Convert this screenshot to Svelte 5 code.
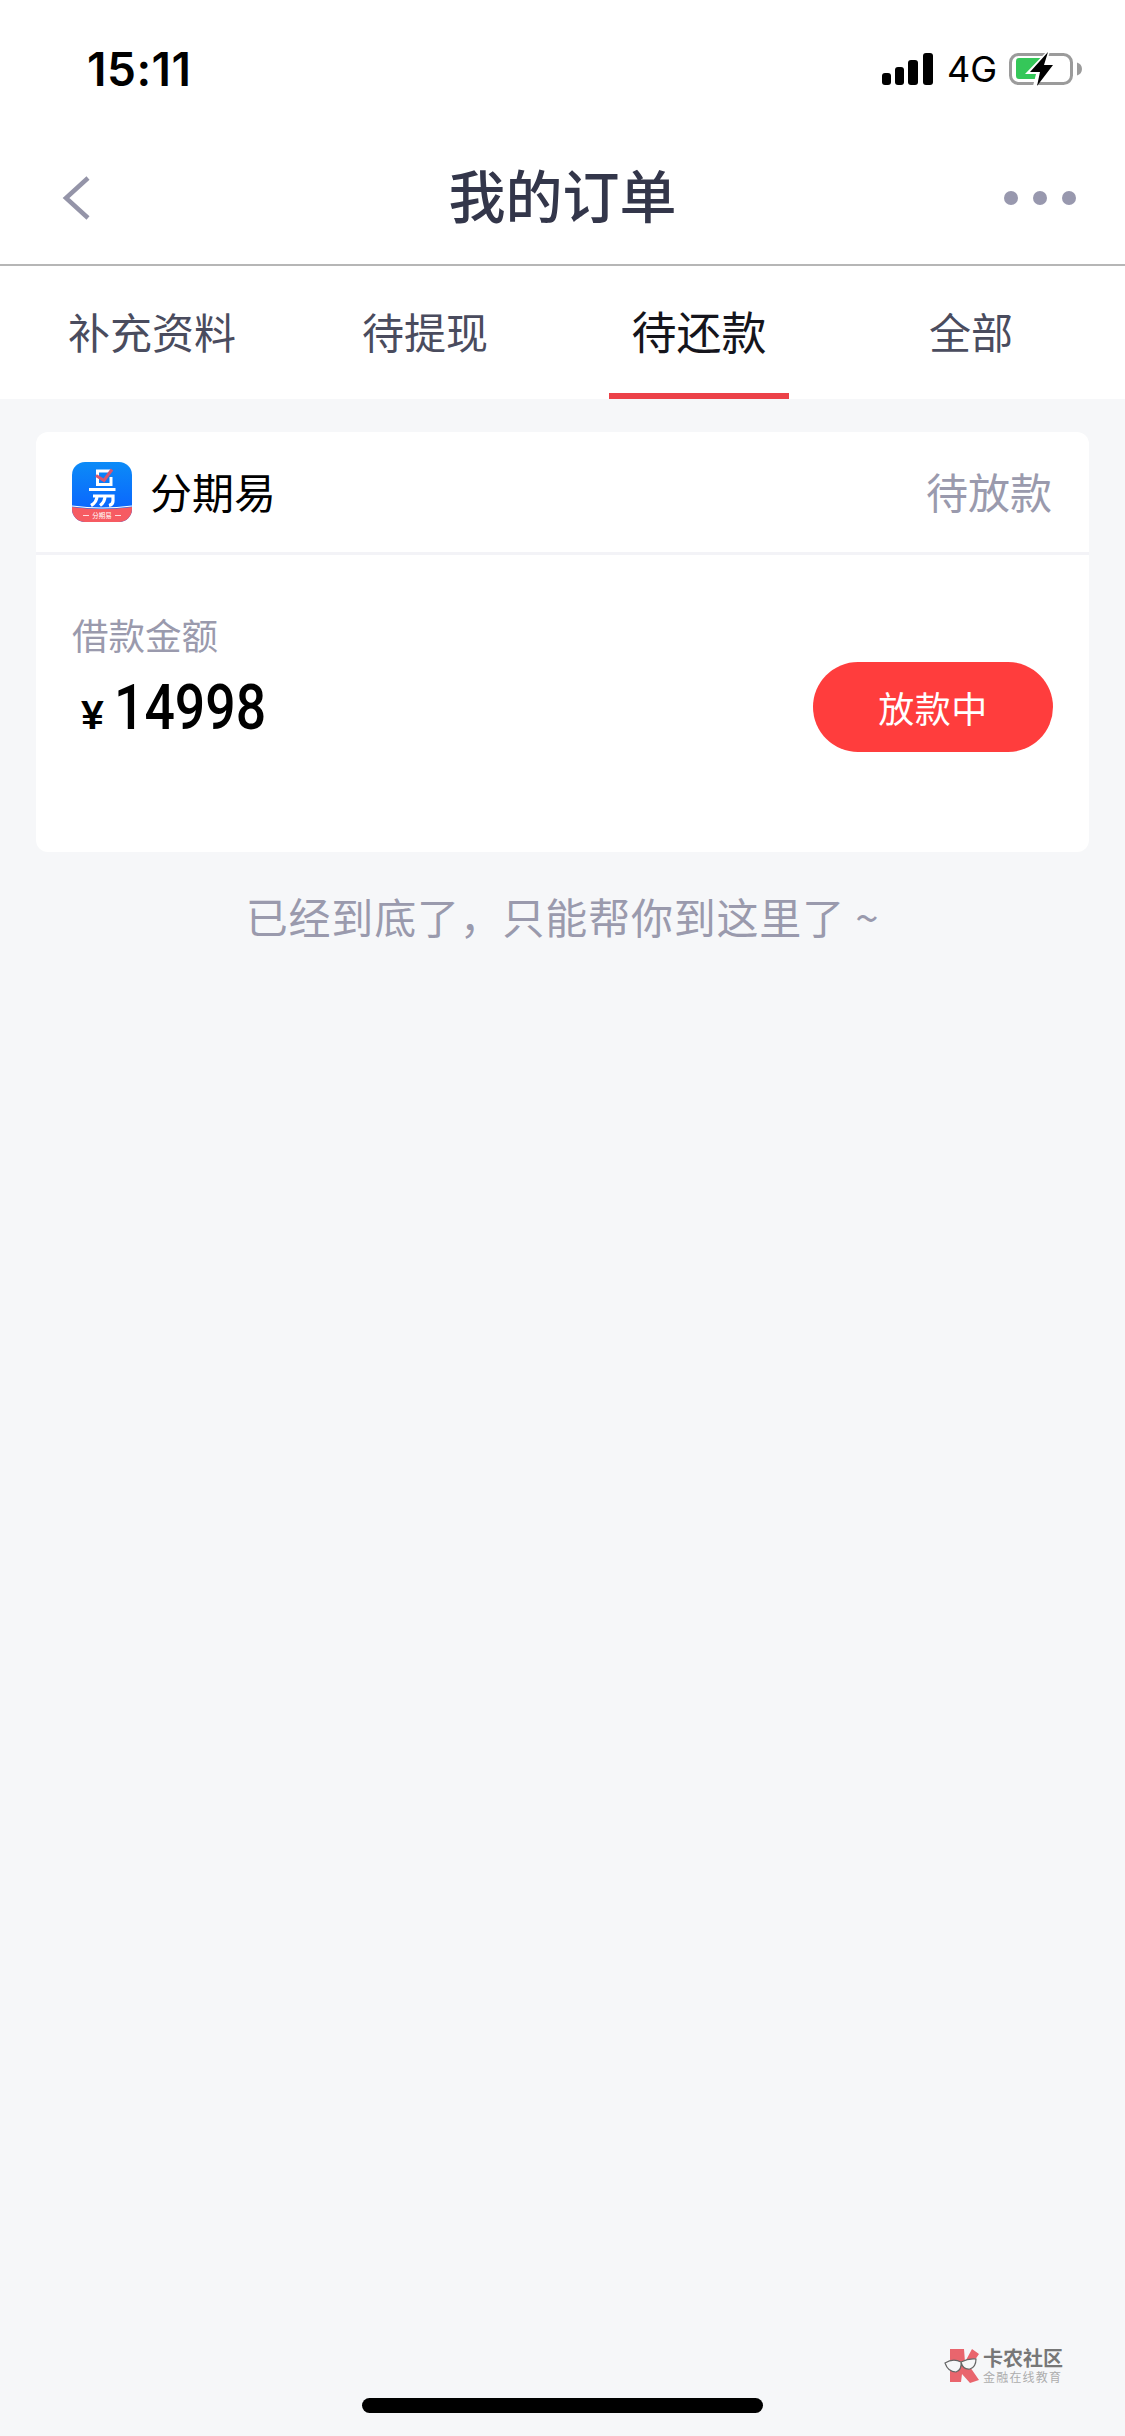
<script>
  const tabs = [
    { label: '补充资料', active: false },
    { label: '待提现', active: false },
    { label: '待还款', active: true },
    { label: '全部', active: false }
  ];
</script>

<div class="page">
  <header class="top">
    <div class="status">
      <span class="time">15:11</span>
      <div class="status-right">
        <svg class="signal" viewBox="882 52 52 34" width="52" height="34">
          <rect x="882" y="73" width="9" height="12" rx="3" fill="#000" />
          <rect x="895" y="67" width="9" height="18" rx="3" fill="#000" />
          <rect x="908" y="60" width="10" height="25" rx="3" fill="#000" />
          <rect x="923" y="53" width="10" height="32" rx="3" fill="#000" />
        </svg>
        <span class="net">4G</span>
        <svg class="battery" viewBox="1009 50 74 38" width="74" height="38">
          <rect x="1010.5" y="54.5" width="61" height="29" rx="8" fill="none" stroke="#9b9b9b" stroke-width="3" />
          <path d="M1077 62.5c3 1 5 3 5 6.500s-2 5.500-5 6.500z" fill="#9b9b9b" />
          <path d="M1016 61q0-3 3-3h22v21h-22q-3 0-3-3z" fill="#35c759" />
          <path d="M1051 47l-26 27h11l-4 16 27-28h-12z" fill="#fff" />
          <path d="M1048 52l-18 20h10l-3 14 16-21h-9z" fill="#000" />
        </svg>
      </div>
    </div>
    <nav class="nav">
      <svg class="back" viewBox="0 0 30 46" width="30" height="46">
        <path d="M27 3 5 23l22 20" fill="none" stroke="#9494a8" stroke-width="4.500" />
      </svg>
      <h1 class="title">我的订单</h1>
      <div class="dots"><i></i><i></i><i></i></div>
    </nav>
  </header>

  <div class="tabs">
    {#each tabs as tab}
      <div class="tab" class:active={tab.active}>{tab.label}</div>
    {/each}
  </div>

  <section class="card">
    <div class="card-head">
      <svg class="app-icon" viewBox="0 0 60 60" width="60" height="60">
        <defs>
          <linearGradient id="blue" x1="0" y1="0" x2="0" y2="1">
            <stop offset="0" stop-color="#0c8bf7" />
            <stop offset="1" stop-color="#0a5cff" />
          </linearGradient>
          <clipPath id="squircle"><rect width="60" height="60" rx="13" /></clipPath>
        </defs>
        <g clip-path="url(#squircle)">
          <rect width="60" height="60" fill="url(#blue)" />
          <path d="M0 45q30 4 60 0v15H0z" fill="#f65b62" />
          <path d="M0 44q30 4 60 0" fill="none" stroke="#fff" stroke-width="1.200" />
          <path d="M39 9H25.500V22.500H39V15" fill="none" stroke="#fff" stroke-width="3" />
          <path d="M24 13.500l8 5 8-11" fill="none" stroke="#d9566e" stroke-width="3" />
          <path d="M17 27.500H43.500" stroke="#fff" stroke-width="3.200" />
          <path d="M21 34H41v5q0 3.500-4 4.500M25 34q0 6-6 9.500M33 34q0 6-5 9.500" fill="none" stroke="#fff" stroke-width="3.200" />
          <path d="M11 53.500h6M49 53.500h-6" stroke="#fff" stroke-width="0.800" />
        </g>
        <text x="30" y="56" text-anchor="middle" class="icon-text">分期易</text>
      </svg>
      <span class="app-name">分期易</span>
      <span class="state">待放款</span>
    </div>
    <div class="card-body">
      <div class="label">借款金额</div>
      <div class="row">
        <div class="amount"><span class="yen">¥</span><span class="num">14998</span></div>
        <div class="btn">放款中</div>
      </div>
    </div>
  </section>

  <p class="end">已经到底了，只能帮你到这里了 ~</p>

  <div class="mark">
    <svg viewBox="0 0 36 36" width="36" height="36">
      <path d="M6 1h14l1 13L28 1l7 5-9 13 9 13-9 3-8-9-1 8H6z" fill="#e9656d" />
      <path d="M1 15q8-5 16-1 1 8-5 10-8 0-11-9zM17 14q8-4 15-3 0 8-6 10-7 1-9-7z" fill="#f6f7f9" stroke="#666" stroke-width="1.200" />
    </svg>
    <div class="mark-text">
      <b>卡农社区</b>
      <small>金融在线教育</small>
    </div>
  </div>

  <div class="home"></div>
</div>

<style>
  :global(body) {
    margin: 0;
    background: #f6f7f9;
  }
  .page {
    position: relative;
    width: 1125px;
    height: 2436px;
    overflow: hidden;
    background: #f6f7f9;
    font-family: "Noto Sans CJK SC", "Noto Sans", sans-serif;
  }
  .top {
    background: #fff;
    border-bottom: 2px solid #b6b6b6;
  }
  .status {
    box-sizing: border-box;
    height: 131px;
    padding: 44px 42px 0 87px;
    display: flex;
    justify-content: space-between;
    align-items: flex-start;
  }
  .time {
    font-family: Inter, "Liberation Sans", sans-serif;
    font-size: 46px;
    line-height: 50px;
    font-weight: 600;
    color: #000;
    letter-spacing: 0.500px;
  }
  .status-right {
    display: flex;
    align-items: center;
    height: 50px;
  }
  .signal, .battery { display: block; }
  .net {
    font-family: Inter, "Liberation Sans", sans-serif;
    font-size: 36px;
    line-height: 50px;
    color: #000;
    width: 47px;
    margin: 0 15px 0 13px;
  }
  .nav {
    box-sizing: border-box;
    height: 133px;
    padding: 0 49px;
    display: grid;
    grid-template-columns: 1fr auto 1fr;
    align-items: center;
  }
  .back {
    display: block;
    margin-left: 12px;
  }
  .title {
    margin: 0;
    padding-bottom: 10px;
    font-size: 57px;
    line-height: 80px;
    font-weight: 500;
    color: #33364a;
  }
  .dots {
    display: flex;
    justify-content: flex-end;
    gap: 15px;
  }
  .dots i {
    display: block;
    width: 14px;
    height: 14px;
    border-radius: 50%;
    background: #9898ae;
  }
  .tabs {
    box-sizing: border-box;
    height: 133px;
    background: #fff;
    display: grid;
    grid-template-columns: 304px 242px 306px 238px;
  }
  .tab {
    position: relative;
    display: flex;
    align-items: center;
    justify-content: center;
    padding-bottom: 4px;
    font-size: 42px;
    color: #4a4c5e;
  }
  .tab.active {
    font-size: 45px;
    color: #15151c;
  }
  .tab.active::after {
    content: "";
    position: absolute;
    left: 63px;
    bottom: 0;
    width: 180px;
    height: 6px;
    background: #ec4148;
  }
  .card {
    margin: 33px 36px 0;
    background: #fff;
    border-radius: 12px;
  }
  .card-head {
    box-sizing: border-box;
    height: 123px;
    padding: 0 37px 0 36px;
    border-bottom: 3px solid #f3f3f7;
    display: flex;
    align-items: center;
  }
  .app-icon { display: block; }
  .icon-text {
    font-size: 6.500px;
    fill: #fff;
  }
  .app-name {
    margin-left: 18px;
    padding-bottom: 4px;
    font-size: 42px;
    color: #000;
  }
  .state {
    margin-left: auto;
    padding-bottom: 4px;
    font-size: 42px;
    color: #9a9aad;
  }
  .card-body {
    padding: 55px 36px 100px;
  }
  .label {
    font-size: 36.500px;
    line-height: 50px;
    color: #9a9aad;
    margin-bottom: 2px;
  }
  .row {
    height: 90px;
    display: flex;
    align-items: center;
    justify-content: space-between;
  }
  .amount {
    display: flex;
    align-items: baseline;
    padding-left: 9px;
    color: #000;
  }
  .yen {
    font-family: "Liberation Sans", sans-serif;
    font-weight: 700;
    font-size: 41px;
    width: 33px;
  }
  .num {
    font-family: Roboto, "Liberation Sans", sans-serif;
    font-weight: 500;
    font-size: 63px;
    display: inline-block;
    transform: scaleX(0.85);
    transform-origin: left center;
  }
  .btn {
    width: 240px;
    height: 90px;
    border-radius: 45px;
    background: #ff3d3d;
    color: #fff;
    font-size: 36px;
    letter-spacing: 0.500px;
    display: flex;
    align-items: center;
    justify-content: center;
  }
  .end {
    margin: 39px 0 0;
    text-align: center;
    font-size: 42px;
    line-height: 50px;
    letter-spacing: 0.800px;
    color: #9a9aad;
  }
  .mark {
    position: absolute;
    left: 944px;
    top: 2348px;
    display: flex;
    gap: 3px;
    align-items: flex-start;
    font-family: "Liberation Sans", "Noto Sans CJK SC", sans-serif;
  }
  .mark-text {
    display: flex;
    flex-direction: column;
  }
  .mark-text b {
    font-size: 20px;
    line-height: 23px;
    color: #777;
    font-weight: 700;
  }
  .mark-text small {
    font-size: 12px;
    line-height: 14px;
    letter-spacing: 1.200px;
    color: #adadad;
  }
  .home {
    position: absolute;
    left: 362px;
    top: 2398px;
    width: 401px;
    height: 15px;
    border-radius: 8px;
    background: #000;
  }
</style>
